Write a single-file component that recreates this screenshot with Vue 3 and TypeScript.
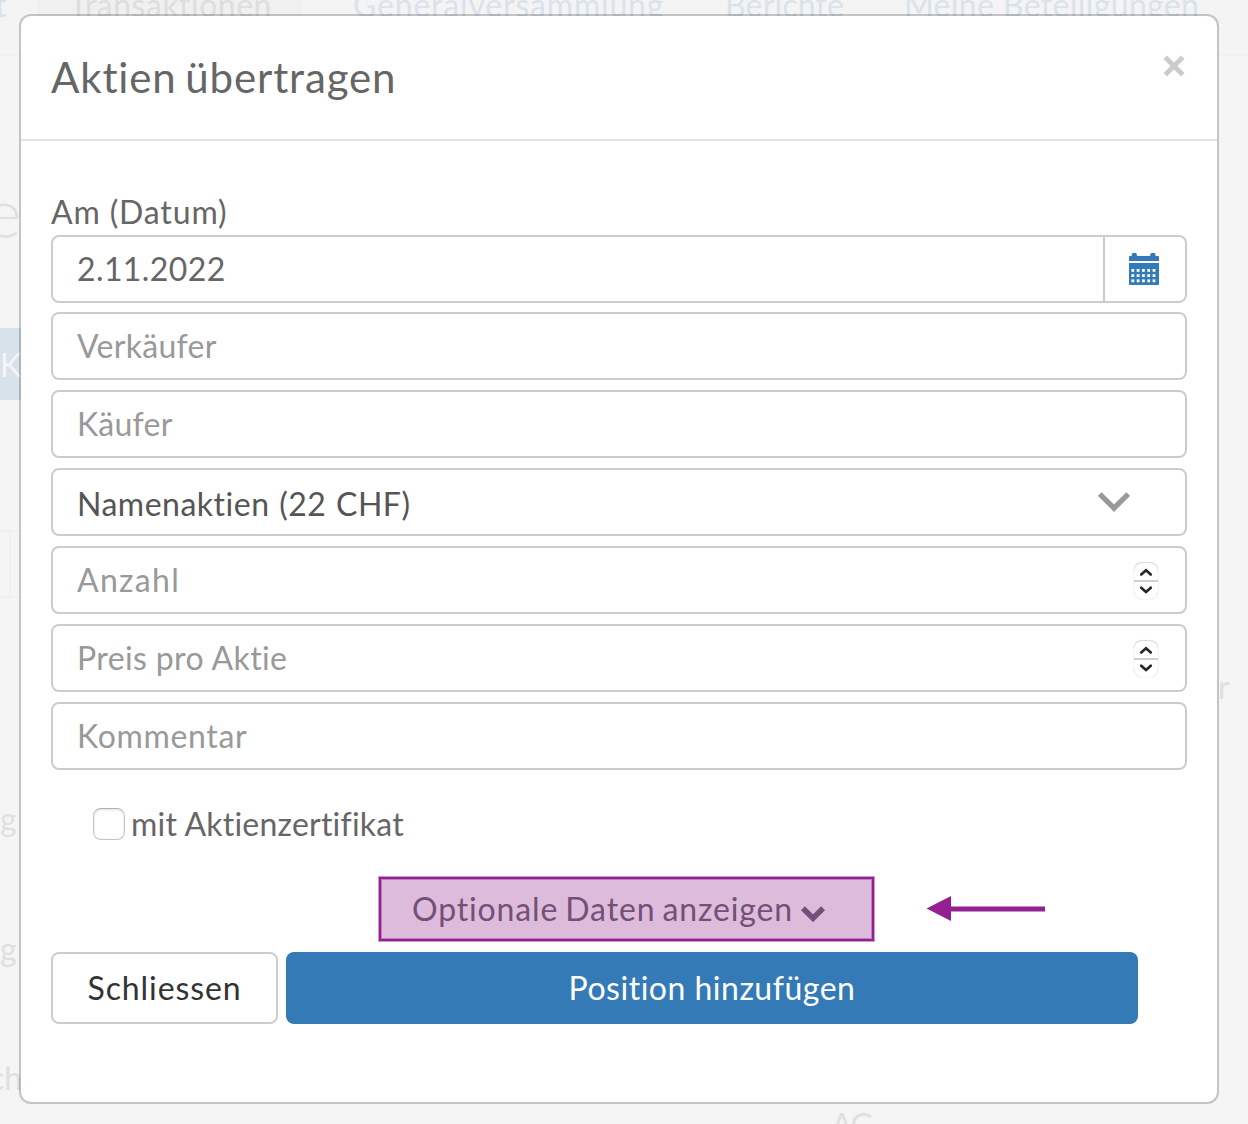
<script setup lang="ts">
import { ref } from 'vue'

interface Field {
  id: string
  placeholder: string
  spacing: number
  kind: 'text' | 'select' | 'number'
}

const date = ref('2.11.2022')
const withCertificate = ref(false)

const fields: Field[] = [
  { id: 'seller', placeholder: 'Verkäufer', spacing: 0.3, kind: 'text' },
  { id: 'buyer', placeholder: 'Käufer', spacing: 0.25, kind: 'text' },
  { id: 'category', placeholder: 'Namenaktien (22 CHF)', spacing: 0.5, kind: 'select' },
  { id: 'amount', placeholder: 'Anzahl', spacing: 1.3, kind: 'number' },
  { id: 'price', placeholder: 'Preis pro Aktie', spacing: 0.38, kind: 'number' },
  { id: 'comment', placeholder: 'Kommentar', spacing: 0.67, kind: 'text' },
]

const calendarCells = [0, 1, 2].flatMap((row) =>
  [0, 1, 2, 3, 4].map((col) => ({ x: 3 + col * 5.3, y: 16 + row * 5.2 })),
)
</script>

<template>
  <div class="screen">
    <div class="page">
      <nav class="nav">
        <span class="nav-item first">t</span>
        <span class="nav-item active">Transaktionen</span>
        <span class="nav-item general">Generalversammlung</span>
        <span class="nav-item reports">Berichte</span>
        <span class="nav-item holdings">Meine Beteiligungen</span>
      </nav>
      <div class="page-body">
        <div class="page-left">
          <div class="page-title">e</div>
          <div class="page-button">K</div>
          <div class="page-filter"></div>
          <div class="cell c1">g</div>
          <div class="cell c2">g</div>
          <div class="cell c3">ch</div>
        </div>
        <div class="page-mid">AG</div>
        <div class="page-right">r</div>
      </div>
    </div>

    <section class="modal" role="dialog">
      <header class="head">
        <h1>Aktien übertragen</h1>
        <button class="close" type="button" aria-label="Schliessen">
          <svg width="22" height="22" viewBox="0 0 22 22">
            <path d="M2.2 2.2 19.8 19.8M19.8 2.2 2.2 19.8" stroke="#ccc" stroke-width="5" fill="none" />
          </svg>
        </button>
      </header>

      <form class="body" @submit.prevent>
        <label class="label" for="date">Am (Datum)</label>
        <div class="box date">
          <input id="date" v-model="date" type="text" />
          <button class="addon" type="button" aria-label="Kalender">
            <svg width="30" height="32" viewBox="0 0 30 32">
              <path
                fill="#337ab7"
                d="M0 8V4Q0 3 1 3H2.700V1.500Q2.700 0 4.200 0H6.400Q7.900 0 7.900 1.500V3H21.300V1.500Q21.300 0 22.800 0H25Q26.500 0 26.500 1.500V3H29Q30 3 30 4V8ZM0 10H30V31Q30 32 29 32H1Q0 32 0 31Z"
              />
              <rect v-for="(c, i) in calendarCells" :key="i" :x="c.x - 0.6" :y="c.y" width="2.800" height="2.800" fill="#fff" />
            </svg>
          </button>
        </div>

        <div v-for="f in fields" :key="f.id" class="box" :class="f.kind">
          <span v-if="f.kind === 'select'" class="value" :style="{ letterSpacing: f.spacing + 'px' }">{{ f.placeholder }}</span>
          <input v-else :id="f.id" type="text" :placeholder="f.placeholder" :style="{ letterSpacing: f.spacing + 'px' }" />
          <svg v-if="f.kind === 'select'" class="chevron" width="32" height="20" viewBox="0 0 32 20">
            <path d="M1.800 2 16 16.200 30.200 2" fill="none" stroke="#999" stroke-width="5.200" />
          </svg>
          <span v-if="f.kind === 'number'" class="spinner">
            <svg width="24" height="36" viewBox="0 0 24 36">
              <path d="M0 18H24" stroke="#d0d0d0" stroke-width="2" />
              <path
                d="M7.200 11.500 12 7.200 16.800 11.500M7.200 24.700 12 29 16.800 24.700"
                fill="none"
                stroke="#262626"
                stroke-width="2.600"
                stroke-linecap="round"
              />
            </svg>
          </span>
        </div>

        <label class="check">
          <input v-model="withCertificate" type="checkbox" />
          <span>mit Aktienzertifikat</span>
        </label>

        <div class="optional">
          <button class="toggle" type="button">
            <span>Optionale Daten anzeigen</span>
            <svg width="24" height="16" viewBox="0 0 24 16">
              <path d="M1.900 2.300 12 12.200 22.100 2.300" fill="none" stroke="#744f77" stroke-width="5.600" />
            </svg>
          </button>
          <svg class="arrow" width="119" height="26" viewBox="0 0 119 26">
            <path d="M.6 12.500 25 0V25Z" fill="#942092" />
            <path d="M24 13H119" stroke="#942092" stroke-width="5" />
          </svg>
        </div>

        <div class="actions">
          <button class="btn default" type="button">Schliessen</button>
          <button class="btn primary" type="submit">Position hinzufügen</button>
        </div>
      </form>
    </section>
  </div>
</template>

<style>
body {
  margin: 0;
  background: #f5f5f5;
}
</style>

<style scoped>
.screen {
  position: relative;
  width: 1248px;
  height: 1124px;
  overflow: hidden;
  background: #f5f5f5;
  color: #666;
  font: 32px/40px Lato, "Open Sans", sans-serif;
}
.screen * {
  box-sizing: border-box;
}
button,
input {
  font: inherit;
  color: inherit;
  margin: 0;
  padding: 0;
  border: 0;
  background: none;
  outline: 0;
}
svg {
  display: block;
  flex: none;
}

/* Page behind the dialog */
.page {
  height: 1124px;
}
.nav {
  display: flex;
  height: 56px;
  background: #f4f4f4;
  border-bottom: 2px solid #f1f1f1;
  color: #d9e3ec;
}
.nav-item {
  flex: none;
  height: 54px;
  line-height: 9px;
  white-space: nowrap;
}
.first {
  width: 37px;
  text-indent: -5px;
}
.active {
  width: 266px;
  padding-left: 32px;
  background: #f0f0f0;
  color: #dedede;
  letter-spacing: 0.5px;
}
.general {
  width: 422px;
  padding-left: 50px;
  letter-spacing: 0.82px;
}
.reports {
  width: 179px;
  letter-spacing: 0.15px;
}
.holdings {
  letter-spacing: 0.35px;
}
.page-body {
  display: flex;
  height: 1068px;
  color: #e0e0e0;
}
.page-left {
  flex: none;
  width: 21px;
  overflow: hidden;
}
.page-title {
  margin: 116px 0 0 -14px;
  height: 80px;
  font-size: 68px;
  font-weight: 300;
  line-height: 80px;
}
.page-button {
  height: 72px;
  margin-top: 76px;
  background: #d8e2eb;
  color: #f5f5f5;
  line-height: 73px;
}
.page-filter {
  height: 68px;
  margin-top: 130px;
  border: 2px solid #f0f0f0;
  border-left: 0;
  border-right: 0;
  background: linear-gradient(#f0f0f0, #f0f0f0) 9px 0 / 2px 100% no-repeat;
}
.cell {
  height: 40px;
}
.c1 {
  margin-top: 201px;
}
.c2 {
  margin-top: 90px;
}
.c3 {
  margin: 89px 0 0 -11px;
}
.page-mid {
  flex: none;
  width: 1200px;
  padding: 1049px 0 0 810px;
  letter-spacing: -1.5px;
}
.page-right {
  padding-top: 611px;
  margin-left: -3px;
}

/* Dialog */
.modal {
  position: absolute;
  top: 14px;
  left: 19px;
  width: 1200px;
  height: 1090px;
  border: 2px solid rgba(0, 0, 0, 0.2);
  border-radius: 12px;
  background: #fff;
  background-clip: padding-box;
}
.head {
  display: flex;
  justify-content: space-between;
  height: 125px;
  padding: 31px 32px 0 30px;
  border-bottom: 2px solid #e5e5e5;
}
h1 {
  margin: 0;
  font-size: 42px;
  font-weight: 400;
  line-height: 60px;
  letter-spacing: 0.87px;
  word-spacing: -3px;
}
.close {
  width: 22px;
  height: 22px;
  margin-top: 8px;
}
.body {
  padding: 50px 30px 0;
}
.label {
  display: block;
  height: 44px;
  line-height: 41px;
  letter-spacing: 0.85px;
}
.box {
  display: flex;
  align-items: center;
  height: 68px;
  margin-bottom: 10px;
  padding-left: 24px;
  border: 2px solid #ccc;
  border-radius: 8px;
  background: #fff;
}
.box input {
  flex: 1;
  min-width: 0;
  height: 60px;
  padding-bottom: 2px;
}
.box input::placeholder {
  color: #999;
  opacity: 1;
}
.date {
  margin-bottom: 9px;
}
.date input {
  letter-spacing: 0.4px;
}
.addon {
  display: flex;
  align-items: center;
  width: 82px;
  height: 64px;
  padding-left: 24px;
  border-left: 2px solid #ccc;
}
.value {
  flex: 1;
  padding-top: 4px;
  color: #555;
  word-spacing: 1px;
}
.chevron {
  margin-right: 55px;
}
.spinner {
  width: 24px;
  height: 36px;
  margin: 1px 27px 0 0;
  border-radius: 8px;
  box-shadow: 0 0 1px rgba(0, 0, 0, 0.3), 0 -1px 1px rgba(0, 0, 0, 0.12);
}
.check {
  display: flex;
  align-items: center;
  height: 40px;
  margin: 34px 0 0 42px;
}
.check input {
  appearance: none;
  width: 32px;
  height: 32px;
  margin-right: 6px;
  border: 1px solid #c4c4c4;
  border-top-color: #b0b0b0;
  border-radius: 8px;
  box-shadow: inset 0 1px 3px rgba(0, 0, 0, 0.12);
}
.check span {
  letter-spacing: 0.22px;
}
.optional {
  display: flex;
  align-items: center;
  height: 64px;
  margin: 33px 0 0 328px;
}
.toggle {
  display: flex;
  align-items: center;
  width: 495px;
  height: 64px;
  padding-left: 31px;
  border: 2px solid #942092;
  background: #ddbbdb;
  box-shadow: 0 0 0 1px rgba(148, 32, 146, 0.45), inset 0 0 0 1px rgba(148, 32, 146, 0.4);
  color: #744f77;
}
.toggle span {
  width: 389px;
  padding-bottom: 1px;
  letter-spacing: 0.86px;
  word-spacing: -2px;
  text-align: left;
  white-space: nowrap;
}
.toggle svg {
  margin-top: 9px;
}
.arrow {
  margin-left: 52px;
}
.actions {
  display: flex;
  gap: 8px;
  margin-top: 11px;
}
.btn {
  height: 72px;
  border-radius: 8px;
}
.default {
  width: 227px;
  border: 2px solid #ccc;
  background: #fff;
  color: #333;
  letter-spacing: 0.9px;
}
.primary {
  width: 852px;
  background: #337ab7;
  color: #fff;
  letter-spacing: 0.5px;
}
</style>
